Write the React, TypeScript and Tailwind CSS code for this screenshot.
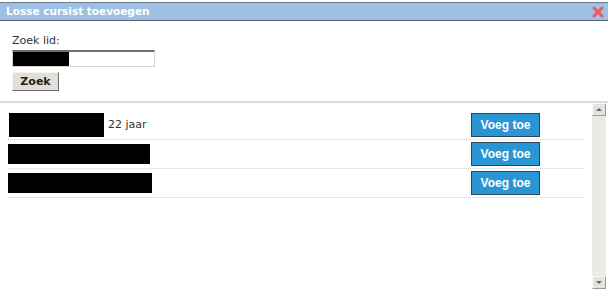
import React from "react";

const rows = [
    { nameWidth: "w-[95px]", nameHeight: "h-[24px]", age: "22 jaar" },
    { nameWidth: "w-[142px]", nameHeight: "h-[20px]", age: "" },
    { nameWidth: "w-[144px]", nameHeight: "h-[20px]", age: "" },
];

const App = () => {
    return (
        <div
            className="w-[608px] h-[293px] bg-white overflow-hidden text-[#333]"
            style={{ fontFamily: '"DejaVu Sans", Verdana, sans-serif' }}
        >
            {/* title bar */}
            <div className="mt-[2px] h-[19px] border-t border-b border-t-[#6d7a88] border-b-[#55606b] bg-[#9dc0e4] flex items-center justify-between pl-[6px] pr-[4px]">
                <span className="text-white font-bold text-[10.5px]">
                    Losse cursist toevoegen
                </span>
                <svg width="12" height="12" viewBox="0 0 12 12">
                    <path d="M2 2 L10 10 M10 2 L2 10" stroke="#f0595b" strokeWidth="3" strokeLinecap="round" />
                </svg>
            </div>

            {/* search */}
            <div className="pl-[12px] pt-[13px] h-[80px]">
                <div className="text-[11px] leading-[13px]">Zoek lid:</div>
                <div className="mt-[3px] w-[143px] h-[17px] border border-[#d8d6cc] border-t-[2px] border-t-[#707070] bg-white flex">
                    <div className="w-[56px] h-full bg-black" />
                </div>
                <button className="mt-[5px] w-[47px] h-[19px] bg-[#e2dfd7] border border-[#f4f3ef] border-r-[#6e6e6e] border-b-[#6e6e6e] text-[11px] font-bold text-[#222] leading-none">
                    Zoek
                </button>
            </div>

            {/* results */}
            <div className="flex border-t-[2px] border-[#dcdcdc] h-[190px]">
                <div className="flex-1 pl-[8px] pr-[9px] pt-[8px]">
                    {rows.map((row, i) => (
                        <div
                            key={i}
                            className="flex items-center justify-between h-[29px] border-b border-dotted border-[#cfcfcf]"
                        >
                            <div className="flex items-center">
                                <div className={`${row.nameWidth} ${row.nameHeight} bg-black ${i === 0 ? "ml-[1px]" : ""}`} />
                                {row.age && (
                                    <span className="ml-[4px] text-[11px] text-[#333]">{row.age}</span>
                                )}
                            </div>
                            <button
                                className="mr-[43px] w-[69px] h-[24px] bg-[#2a95d3] border border-[#2a4658] text-white font-bold text-[12px]"
                                style={{ fontFamily: '"Liberation Sans", Arial, sans-serif' }}
                            >
                                Voeg toe
                            </button>
                        </div>
                    ))}
                </div>
                {/* scrollbar */}
                <div className="w-[14px] mr-[2px] h-[186px] bg-[#ebeae6] flex flex-col justify-between">
                    <div className="h-[13px] bg-[#e4e3df] border border-[#fafaf8] border-r-[#9a9a96] border-b-[#9a9a96] flex items-center justify-center">
                        <div className="w-0 h-0 border-l-[3px] border-r-[3px] border-b-[3px] border-l-transparent border-r-transparent border-b-[#666]" />
                    </div>
                    <div className="h-[13px] bg-[#e4e3df] border border-[#fafaf8] border-r-[#9a9a96] border-b-[#9a9a96] flex items-center justify-center">
                        <div className="w-0 h-0 border-l-[3px] border-r-[3px] border-t-[3px] border-l-transparent border-r-transparent border-t-[#666]" />
                    </div>
                </div>
            </div>
        </div>
    );
};

export default App;
